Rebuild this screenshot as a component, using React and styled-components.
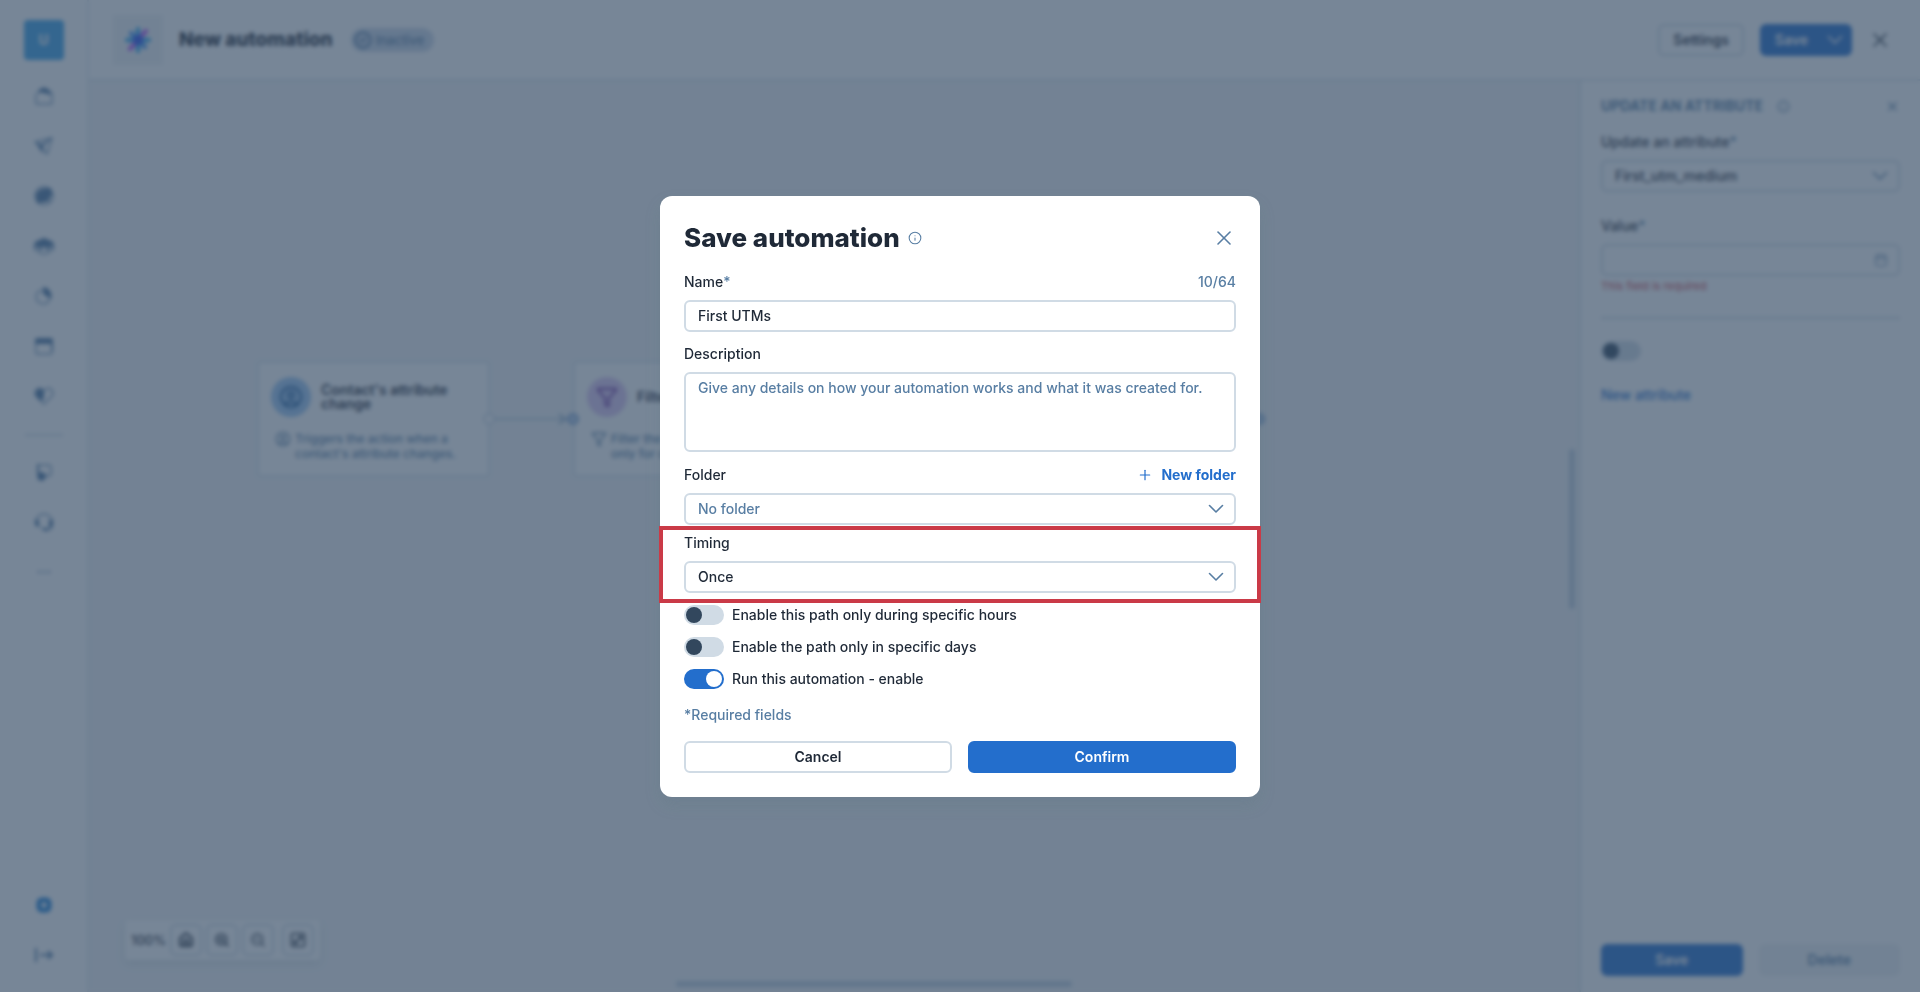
import { useState } from 'react';
import styled, { createGlobalStyle } from 'styled-components';
import { Calendar, CircleCheck, CircleUser, Filter, House, ZoomIn, ZoomOut, X, Info, Plus } from 'lucide-react';

const GlobalStyle = createGlobalStyle`
  * { box-sizing: border-box; }
  body {
    margin: 0;
    font-family: Inter, "Open Sans", sans-serif;
    font-size: 14px;
    line-height: 20px;
    font-weight: 500;
    color: #1f2937;
  }
  button, input, select, textarea { font: inherit; color: inherit; }
  h1, h2, h3, p { margin: 0; }
`;

// ---------- page behind the dialog ----------

const Page = styled.div`
  display: flex;
  height: 100vh;
  overflow: hidden;
  background: #fff;
`;

const Sidebar = styled.nav`
  display: flex;
  flex-direction: column;
  align-items: center;
  width: 89px;
  padding: 20px 0 12px;
  border-right: 2px solid #e8eef3;
`;

const Brand = styled.button`
  width: 40px;
  height: 40px;
  margin-bottom: 11px;
  border: 0;
  border-radius: 4px;
  background: #38a0e8;
  color: #e6f1fb;
  font-weight: 800;
`;

const NavButton = styled.button`
  display: grid;
  place-items: center;
  width: 50px;
  height: 50px;
  padding: 0;
  border: 0;
  background: none;
  color: ${props => (props.$active ? '#1c7fd6' : '#4a74a0')};
`;

const NavDivider = styled.hr`
  width: 38px;
  margin: 13px 0 11px;
  border: 0;
  border-top: 2px solid #cfdbe6;
`;

const Spacer = styled.div`
  flex: 1;
`;

const Main = styled.div`
  flex: 1;
  min-width: 0;
  display: flex;
  flex-direction: column;
`;

const Header = styled.header`
  display: flex;
  align-items: center;
  height: 81px;
  padding: 0 28px 0 24px;
  border-bottom: 2px solid #dce5ec;
`;

const AppIcon = styled.div`
  display: grid;
  place-items: center;
  width: 50px;
  height: 50px;
  background: #f1f4f6;
`;

const PageTitle = styled.h1`
  margin: 0 18px 0 16px;
  font-size: 19px;
  line-height: 28px;
  font-weight: 800;
`;

const Status = styled.span`
  display: flex;
  align-items: center;
  gap: 4px;
  height: 24px;
  padding: 0 10px 0 3px;
  border-radius: 12px;
  background: #cbd7e8;
  color: #587ea3;
  font-size: 13px;
`;

const HeaderActions = styled.div`
  display: flex;
  align-items: center;
  gap: 16px;
  margin-left: auto;
`;

const Button = styled.button`
  height: 32px;
  padding: 0 13px;
  border: 2px solid ${props => (props.$primary ? '#236ecc' : '#d0dbe5')};
  border-radius: 6px;
  background: ${props => (props.$primary ? '#236ecc' : '#fff')};
  color: ${props => (props.$primary ? '#fff' : '#1f2937')};
  font-weight: 600;

  &:disabled {
    border-color: #f0f3f5;
    background: #f0f3f5;
    color: #587ea3;
  }
`;

const SplitButton = styled.div`
  display: flex;

  button:first-child { border-radius: 6px 0 0 6px; padding-right: 8px; }
  button:last-child { border-radius: 0 6px 6px 0; padding: 0 5px; }
  svg { display: block; }
`;

const IconButton = styled.button`
  display: grid;
  place-items: center;
  width: 24px;
  height: 24px;
  padding: 0;
  border: 0;
  background: none;
  color: ${props => (props.$dark ? '#1f2937' : '#587ea3')};
`;

const Body = styled.div`
  flex: 1;
  min-height: 0;
  display: flex;
`;

const Canvas = styled.main`
  position: relative;
  flex: 1;
  overflow: hidden;
  background: #f2f4f6;
`;

const Node = styled.article`
  position: absolute;
  left: ${props => props.$x}px;
  top: 280px;
  width: 233px;
  height: 116px;
  padding: 14px 12px;
  border: 2px solid #dce6ed;
  border-radius: 4px;
  background: #fff;
`;

const NodeHead = styled.div`
  display: flex;
  align-items: center;
  gap: 10px;
  height: 40px;
`;

const NodeIcon = styled.span`
  display: grid;
  place-items: center;
  flex: none;
  width: 40px;
  height: 40px;
  border-radius: 50%;
  background: ${props => props.$bg};
  color: ${props => props.$color};
`;

const NodeTitle = styled.h3`
  font-size: 14px;
  line-height: 14px;
  font-weight: 600;
`;

const NodeText = styled.p`
  display: flex;
  gap: 4px;
  margin-top: 14px;
  padding-left: 4px;
  color: #587ea3;
  font-size: 12px;
  line-height: 15px;

  svg { flex: none; }
`;

const Port = styled.span`
  position: absolute;
  left: ${props => props.$x}px;
  top: 332px;
  width: 12px;
  height: 12px;
  border: 2px solid ${props => (props.$input ? '#7fa3d0' : '#cfdbe6')};
  border-radius: 50%;
  background: ${props => (props.$input ? '#b4cce8' : '#fff')};
`;

const Connector = styled.svg`
  position: absolute;
  left: 406px;
  top: 330px;
`;

const ZoomBar = styled.div`
  position: absolute;
  left: 36px;
  bottom: 32px;
  display: flex;
  align-items: center;
  gap: 4px;
  padding: 4px 6px;
  border-radius: 4px;
  background: #fff;
  box-shadow: 0 4px 8px rgba(50, 90, 110, 0.12);
  font-size: 13px;

  button:last-child { margin-left: 4px; }
`;

const ZoomButton = styled.button`
  display: grid;
  place-items: center;
  width: 32px;
  height: 32px;
  padding: 0;
  border: 2px solid #d0dbe5;
  border-radius: 6px;
  background: #fff;
`;

const Thumb = styled.span`
  position: absolute;
  border-radius: 3px;
  background: #c0cede;
  ${props => (props.$vertical
    ? 'right: 4px; bottom: 42%; width: 6px; height: 160px;'
    : 'right: 34%; bottom: 5px; width: 396px; height: 6px;')}
`;

const Panel = styled.aside`
  display: flex;
  flex-direction: column;
  width: 341px;
  padding: 15px 20px 16px;
  border-left: 2px solid #dce5ec;
`;

const PanelHead = styled.div`
  display: flex;
  align-items: center;
  gap: 14px;
  margin-bottom: 16px;
  color: #587ea3;

  h2 { font-size: 14px; line-height: 20px; font-weight: 700; }
  button { margin-left: auto; width: 16px; height: 16px; }
`;

const PanelRule = styled.hr`
  width: 100%;
  margin: 23px 0 22px;
  border: 0;
  border-top: 2px solid #d0dbe5;
`;

const ErrorText = styled.p`
  margin-top: 2px;
  color: #ca3a47;
  font-size: 11px;
  line-height: 16px;
  font-weight: 400;
`;

const Link = styled.a`
  margin-top: 24px;
  color: #236ecc;
  text-decoration: none;
`;

const PanelFooter = styled.div`
  display: grid;
  grid-template-columns: 1fr 1fr;
  gap: 16px;
`;

// ---------- form parts ----------

const Field = styled.div`
  position: relative;
  margin-top: ${props => props.$gap || 0}px;
`;

const LabelRow = styled.div`
  display: flex;
  justify-content: space-between;
  height: 20px;
  margin-bottom: 8px;
`;

const Star = styled.span`
  color: #587ea3;
`;

const Counter = styled.span`
  color: #587ea3;
`;

const inputLook = `
  display: block;
  width: 100%;
  border: 2px solid #d0dbe5;
  border-radius: 6px;
  background: #fff;
  outline: none;
`;

const TextInput = styled.input`
  ${inputLook}
  height: 32px;
  padding: 0 12px;
`;

const TextArea = styled.textarea`
  ${inputLook}
  height: 80px;
  padding: 4px 12px;
  resize: none;

  &::placeholder { color: #587ea3; opacity: 1; }
`;

const SelectBox = styled.div`
  position: relative;

  > svg {
    position: absolute;
    right: ${props => (props.$date ? 12 : 10)}px;
    top: ${props => (props.$date ? 9 : 6)}px;
    color: #587ea3;
    pointer-events: none;
  }
`;

const NativeSelect = styled.select`
  ${inputLook}
  appearance: none;
  height: 32px;
  padding: 0 36px 0 12px;
  color: ${props => (props.$muted ? '#587ea3' : '#1f2937')};
`;

const Switch = styled.input`
  appearance: none;
  flex: none;
  display: flex;
  align-items: center;
  width: 40px;
  height: 20px;
  margin: 0;
  padding: 0 2px;
  border-radius: 10px;
  background: #d0dbe5;

  &::before {
    content: "";
    width: 16px;
    height: 16px;
    border-radius: 50%;
    background: #32475d;
  }
  &:checked { justify-content: flex-end; background: #236ecc; }
  &:checked::before { background: #fff; }
`;

// ---------- dialog ----------

const Overlay = styled.div`
  position: fixed;
  inset: 0;
  display: flex;
  align-items: center;
  justify-content: center;
  background: rgba(50, 73, 98, 0.664);
  backdrop-filter: blur(2px);
`;

const Dialog = styled.form`
  width: 600px;
  padding: 24px;
  border-radius: 12px;
  background: #fff;
  box-shadow: 0 8px 16px rgba(90, 115, 125, 0.2);
`;

const DialogHead = styled.div`
  display: flex;
  align-items: center;
  height: 36px;
  margin-bottom: 16px;
  color: #587ea3;

  h2 {
    margin-right: 8px;
    color: #1f2937;
    font-size: 26px;
    line-height: 36px;
    font-weight: 800;
  }
  button { margin-left: auto; }
`;

const NewFolder = styled.button`
  display: flex;
  align-items: center;
  gap: 8px;
  padding: 0;
  border: 0;
  background: none;
  color: #236ecc;
  font-weight: 700;
`;

const Highlight = styled.span`
  position: absolute;
  inset: -7px -25px -10px;
  border: 4px solid #ca3a47;
  pointer-events: none;
`;

const SwitchList = styled.div`
  display: grid;
  gap: 12px;
  margin: 12px 0 16px;

  label { display: flex; gap: 8px; }
`;

const Hint = styled.p`
  margin-bottom: 16px;
  color: #587ea3;
`;

const DialogFooter = styled.div`
  display: grid;
  grid-template-columns: 1fr 1fr;
  gap: 16px;
`;

// ---------- icons ----------

const Chevron = () => (
  <svg width="20" height="20" viewBox="0 0 20 20" fill="none" stroke="currentColor" strokeWidth="1.6">
    <path d="M3.500 6.500 10 13l6.500-6.500" strokeLinecap="round" strokeLinejoin="round" />
  </svg>
);

const Logo = () => (
  <svg width="28" height="28" viewBox="0 0 28 28" strokeWidth="4" strokeLinecap="round">
    <path d="M14 3v22M3 14h22" stroke="#1aa0f0" />
    <path d="m7 7 14 14" stroke="#2f8cf5" />
    <path d="M22 5 6 23" stroke="#a63cf5" />
    <circle cx="14" cy="14" r="5" fill="#2a50f0" />
  </svg>
);

const Collapse = () => (
  <svg width="20" height="20" viewBox="0 0 20 20" fill="none" stroke="currentColor" strokeWidth="2">
    <path d="M2 3v14M6 10h12M14 6l4 4-4 4" />
  </svg>
);

const FullScreen = () => (
  <svg width="16" height="16" viewBox="0 0 16 16" fill="none" stroke="currentColor" strokeWidth="1.6">
    <rect x="1.500" y="1.500" width="13" height="13" rx="1.500" />
    <path d="M8 4.500h3.500V8M11.500 4.500l-7 7M4.500 8v3.500H8" />
  </svg>
);

// thin outline with one solid part
const DuoIcon = ({ line, solid }) => (
  <svg width="20" height="20" viewBox="0 0 20 20">
    <path d={line} fill="none" stroke="currentColor" strokeOpacity="0.8" strokeWidth="1.400" strokeLinejoin="round" />
    <path d={solid} fill="currentColor" />
  </svg>
);

const navItems = [
  {
    name: "Home",
    line: "M2 8v9a1 1 0 0 0 1 1h14a1 1 0 0 0 1-1V8l-3-4",
    solid: "M2 8 6 3q4-3 8 0l3 6-4-1q-6-3-11 0z",
  },
  {
    name: "Campaigns",
    line: "M1 6 18 2l-5 16-5-6zM4 9l4 3",
    solid: "M18 1 8 12l1 6-4-6-3-6 3 1 2 2z",
  },
  {
    name: "Offers",
    line: "M10 1a9 9 0 1 0 .1 0zM3 4l14 12",
    solid: "M3 17 2 8l5-5 10-1 1 7-5 7z",
  },
  {
    name: "Audience",
    line: "M1 8v7M19 8v7M4 10v6q6 4 12 0v-6",
    solid: "M0 8q2-4 6-4 4-4 8 0 4 0 6 4v5h-2V9l-4 3v3h-2v-4H8v4H6v-3L2 9v4H0z",
  },
  {
    name: "Reports",
    line: "M8 4a7 7 0 1 0 8 8",
    solid: "M9 1a9 9 0 0 1 8 12l-8-5z",
  },
  {
    name: "Calendar",
    line: "M2 6v10a2 2 0 0 0 2 2h12a2 2 0 0 0 2-2V6",
    solid: "M1 8V4a2 2 0 0 1 2-2h14a2 2 0 0 1 2 2v11h-2V8z",
  },
  {
    name: "Loyalty",
    line: "M10 18 2 10C-1 5 5-1 10 5c5-6 11 0 8 5z",
    solid: "M10 5v7l-3 3-5-5C0 6 5 0 10 5z",
  },
];

const moreItems = [
  {
    name: "Integrations",
    line: "M4 3h10a3 3 0 0 1 3 3v5a3 3 0 0 1-3 3h-3",
    solid: "M3 2h2v8l6 1 1 4-3 4-5-1-1-6z",
  },
  {
    name: "Support",
    line: "M2 10a8 8 0 0 1 16 0v4a4 4 0 0 1-4 4h-4l-3-3",
    solid: "M1 8h4v7H3q-3-3-2-7zM15 8h4q1 4-2 8h-2zM9 16h5v3h-4z",
  },
  {
    name: "More",
    line: "M5 10h1",
    solid: "M4 9h2v2H4zM9 9h2v2H9zM14 9h2v2h-2z",
  },
];

const SideNav = () => {
  return (
    <Sidebar>
      <Brand>U</Brand>
      {navItems.map((item) => (
        <NavButton key={item.name} aria-label={item.name}>
          <DuoIcon line={item.line} solid={item.solid} />
        </NavButton>
      ))}
      <NavDivider />
      {moreItems.map((item) => (
        <NavButton key={item.name} aria-label={item.name}>
          <DuoIcon line={item.line} solid={item.solid} />
        </NavButton>
      ))}
      <Spacer />
      <NavButton $active aria-label="Settings">
        <svg width="16" height="16" viewBox="0 0 16 16">
          <rect x="3" y="3" width="10" height="10" rx="3" fill="none" stroke="currentColor" strokeWidth="5" />
        </svg>
      </NavButton>
      <NavButton aria-label="Expand"><Collapse /></NavButton>
    </Sidebar>
  );
};

const Flow = () => {
  return (
    <Canvas>
      <Node $x={168}>
        <NodeHead>
          <NodeIcon $bg="#9cc6f2" $color="#1a5a9c"><CircleUser size={24} /></NodeIcon>
          <NodeTitle>Contact's attribute change</NodeTitle>
        </NodeHead>
        <NodeText>
          <CircleUser size={16} />
          <span>Triggers the action when a contact's attribute changes.</span>
        </NodeText>
      </Node>
      <Node $x={484}>
        <NodeHead>
          <NodeIcon $bg="#dcc6f2" $color="#6a2a9c"><Filter size={22} /></NodeIcon>
          <NodeTitle>Filter</NodeTitle>
        </NodeHead>
        <NodeText>
          <Filter size={16} />
          <span>Filter the path<br />only for contacts.</span>
        </NodeText>
      </Node>
      <Connector width="76" height="16" viewBox="0 0 76 16" fill="none" stroke="#bccddd" strokeWidth="2">
        <path d="M0 8h72" />
        <path d="m64 3 6 5-6 5" stroke="#8fabc8" />
      </Connector>
      <Port $x={394} />
      <Port $x={478} $input />
      <Port $x={1164} $input />
      <ZoomBar>
        <span>100%</span>
        <ZoomButton aria-label="Home"><House size={16} strokeWidth={3} /></ZoomButton>
        <ZoomButton aria-label="Zoom in"><ZoomIn size={16} strokeWidth={2.5} /></ZoomButton>
        <ZoomButton aria-label="Zoom out"><ZoomOut size={16} /></ZoomButton>
        <ZoomButton aria-label="Full screen"><FullScreen /></ZoomButton>
      </ZoomBar>
      <Thumb $vertical />
      <Thumb />
    </Canvas>
  );
};

const AttributePanel = () => {
  return (
    <Panel>
      <PanelHead>
        <h2>UPDATE AN ATTRIBUTE</h2>
        <Info size={13} />
        <IconButton aria-label="Close panel"><X size={15} /></IconButton>
      </PanelHead>
      <Field>
        <LabelRow>
          <label htmlFor="attribute">Update an attribute<Star>*</Star></label>
        </LabelRow>
        <SelectBox>
          <NativeSelect id="attribute" defaultValue="First_utm_medium">
            <option>First_utm_medium</option>
          </NativeSelect>
          <Chevron />
        </SelectBox>
      </Field>
      <Field $gap={24}>
        <LabelRow>
          <label htmlFor="value">Value<Star>*</Star></label>
        </LabelRow>
        <SelectBox $date>
          <TextInput id="value" />
          <Calendar size={14} strokeWidth={1.6} />
        </SelectBox>
        <ErrorText>This field is required</ErrorText>
      </Field>
      <PanelRule />
      <Switch type="checkbox" aria-label="Use attribute" />
      <Link href="#new">New attribute</Link>
      <Spacer />
      <PanelFooter>
        <Button $primary>Save</Button>
        <Button disabled>Delete</Button>
      </PanelFooter>
    </Panel>
  );
};

const SaveDialog = () => {
  const [name, setName] = useState("First UTMs");
  const [description, setDescription] = useState("");

  return (
    <Overlay>
      <Dialog role="dialog" aria-labelledby="dialog-title" onSubmit={(e) => e.preventDefault()}>
        <DialogHead>
          <h2 id="dialog-title">Save automation</h2>
          <Info size={14} strokeWidth={1.8} />
          <IconButton type="button" aria-label="Close"><X size={24} strokeWidth={1.6} /></IconButton>
        </DialogHead>

        <Field>
          <LabelRow>
            <label htmlFor="name">Name<Star>*</Star></label>
            <Counter>{name.length}/64</Counter>
          </LabelRow>
          <TextInput id="name" maxLength={64} value={name} onChange={(e) => setName(e.target.value)} />
        </Field>

        <Field $gap={12}>
          <LabelRow><label htmlFor="description">Description</label></LabelRow>
          <TextArea
            id="description"
            placeholder="Give any details on how your automation works and what it was created for."
            value={description}
            onChange={(e) => setDescription(e.target.value)}
          />
        </Field>

        <Field $gap={13}>
          <LabelRow>
            <label htmlFor="folder">Folder</label>
            <NewFolder type="button"><Plus size={16} strokeWidth={1.8} />New folder</NewFolder>
          </LabelRow>
          <SelectBox>
            <NativeSelect id="folder" $muted><option>No folder</option></NativeSelect>
            <Chevron />
          </SelectBox>
        </Field>

        <Field $gap={8}>
          <LabelRow><label htmlFor="timing">Timing</label></LabelRow>
          <SelectBox>
            <NativeSelect id="timing"><option>Once</option></NativeSelect>
            <Chevron />
          </SelectBox>
          <Highlight />
        </Field>

        <SwitchList>
          <label><Switch type="checkbox" />Enable this path only during specific hours</label>
          <label><Switch type="checkbox" />Enable the path only in specific days</label>
          <label><Switch type="checkbox" defaultChecked />Run this automation - enable</label>
        </SwitchList>

        <Hint>*Required fields</Hint>

        <DialogFooter>
          <Button type="button">Cancel</Button>
          <Button $primary>Confirm</Button>
        </DialogFooter>
      </Dialog>
    </Overlay>
  );
};

function App() {
  return (
    <>
      <GlobalStyle />
      <Page>
        <SideNav />
        <Main>
          <Header>
            <AppIcon><Logo /></AppIcon>
            <PageTitle>New automation</PageTitle>
            <Status><CircleCheck size={18} strokeWidth={3} />Inactive</Status>
            <HeaderActions>
              <Button>Settings</Button>
              <SplitButton>
                <Button $primary>Save</Button>
                <Button $primary aria-label="More save options"><Chevron /></Button>
              </SplitButton>
              <IconButton $dark aria-label="Close editor"><X size={24} strokeWidth={1.6} /></IconButton>
            </HeaderActions>
          </Header>
          <Body>
            <Flow />
            <AttributePanel />
          </Body>
        </Main>
      </Page>
      <SaveDialog />
    </>
  );
}

export default App;
